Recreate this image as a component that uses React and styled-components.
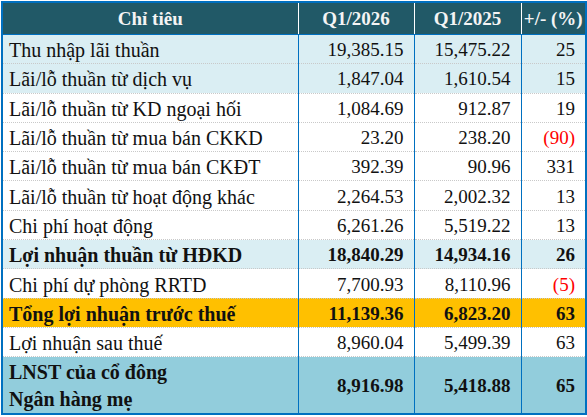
import React from "react";
import styled, { createGlobalStyle } from "styled-components";

const GlobalStyle = createGlobalStyle`
  body {
    margin: 0;
    background: #ffffff;
  }
`;

const Wrap = styled.div`
  padding: 1px 0 0 1px;
`;

const Table = styled.table`
  border-collapse: collapse;
  width: 584px;
  table-layout: fixed;
  font-family: "Liberation Serif", "DejaVu Serif", serif;
  font-size: 19px;
  color: #111;
  border: 2px solid #0070c0;
`;

const HeadCell = styled.th`
  background: #215967;
  color: #f4f4f4;
  font-weight: bold;
  font-size: 19px;
  height: 30px;
  padding: 1px 0 0;
  text-align: center;
  border-left: 1px solid #ffffff;
  border-bottom: 1px solid #0070c0;
  &:first-child {
    border-left: none;
  }
`;

const rowBg = {
  plain: "#ffffff",
  light: "#daeef3",
  orange: "#ffc000",
  teal: "#92cddc",
};

const Row = styled.tr`
  background: ${(p) => rowBg[p.$tone]};
  font-weight: ${(p) => (p.$bold ? "bold" : "normal")};
  td {
    border-bottom: 1px dotted #c9c9c9;
  }
  &:last-child td {
    border-bottom: 2px dotted #0070c0;
  }
`;

const Label = styled.td`
  height: ${(p) => (p.$tall ? "54px" : "26.3px")};
  padding: 2px 4px 0 6px;
  line-height: ${(p) => (p.$tall ? "27px" : "26px")};
  font-size: 20px;
  white-space: nowrap;
`;

const Num = styled.td`
  text-align: right;
  padding: 2px 10px 0 0;
  border-left: 1px solid #0070c0;
  white-space: nowrap;
  color: ${(p) => (p.$neg ? "#ff0000" : "inherit")};
  font-weight: ${(p) => (p.$neg ? "normal" : "inherit")};
`;

const rows = [
  ["Thu nhập lãi thuần", "19,385.15", "15,475.22", "25", "light"],
  ["Lãi/lỗ thuần từ dịch vụ", "1,847.04", "1,610.54", "15", "light"],
  ["Lãi/lỗ thuần từ KD ngoại hối", "1,084.69", "912.87", "19", "plain"],
  ["Lãi/lỗ thuần từ mua bán CKKD", "23.20", "238.20", "(90)", "plain"],
  ["Lãi/lỗ thuần từ mua bán CKĐT", "392.39", "90.96", "331", "plain"],
  ["Lãi/lỗ thuần từ hoạt động khác", "2,264.53", "2,002.32", "13", "plain"],
  ["Chi phí hoạt động", "6,261.26", "5,519.22", "13", "plain"],
  ["Lợi nhuận thuần từ HĐKD", "18,840.29", "14,934.16", "26", "light", true],
  ["Chi phí dự phòng RRTD", "7,700.93", "8,110.96", "(5)", "plain"],
  ["Tổng lợi nhuận trước thuế", "11,139.36", "6,823.20", "63", "orange", true],
  ["Lợi nhuận sau thuế", "8,960.04", "5,499.39", "63", "plain"],
];

export default function App() {
  return (
    <Wrap>
      <GlobalStyle />
      <Table>
        <colgroup>
          <col style={{ width: 296 }} />
          <col style={{ width: 116 }} />
          <col style={{ width: 107 }} />
          <col style={{ width: 65 }} />
        </colgroup>
        <thead>
          <tr>
            <HeadCell>Chỉ tiêu</HeadCell>
            <HeadCell>Q1/2026</HeadCell>
            <HeadCell>Q1/2025</HeadCell>
            <HeadCell>+/- (%)</HeadCell>
          </tr>
        </thead>
        <tbody>
          {rows.map(([label, a, b, pct, tone, bold]) => (
            <Row key={label} $tone={tone} $bold={bold}>
              <Label>{label}</Label>
              <Num>{a}</Num>
              <Num>{b}</Num>
              <Num $neg={pct.startsWith("(")}>{pct}</Num>
            </Row>
          ))}
          <Row $tone="teal" $bold>
            <Label $tall>
              LNST của cổ đông
              <br />
              Ngân hàng mẹ
            </Label>
            <Num>8,916.98</Num>
            <Num>5,418.88</Num>
            <Num>65</Num>
          </Row>
        </tbody>
      </Table>
    </Wrap>
  );
}
